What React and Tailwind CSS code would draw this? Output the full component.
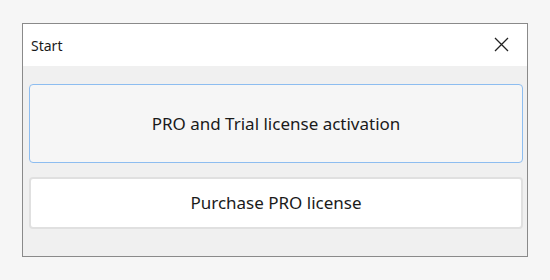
const App = () => {
  return (
    <div
      className="w-[550px] h-[280px] bg-[#f6f6f6] pt-[23px] pl-[22px]"
      style={{ fontFamily: '"Noto Sans", "Open Sans", sans-serif' }}
    >
      <div className="w-[506px] h-[234px] border border-[#8a8a8a] bg-[#f0f0f0] flex flex-col">
        {/* title bar */}
        <div className="h-[42px] bg-white flex items-center justify-between pl-[8px] pr-[18px] text-[#1a1a1a]">
          <span className="text-[14px]">Start</span>
          <svg width="15" height="15" viewBox="0 0 15 15" className="mb-[2px]">
            <path d="M1 1 L14 14 M14 1 L1 14" stroke="#222" strokeWidth="1.3" fill="none" />
          </svg>
        </div>

        {/* body */}
        <div className="flex flex-col pt-[18px] pl-[6px] gap-[14px]">
          <button className="w-[494px] h-[79px] rounded-[4px] border border-[#8dbdf0] bg-[#f6f6f6] text-[17px] text-[#1a1a1a]">
            PRO and Trial license activation
          </button>
          <button className="w-[494px] h-[52px] rounded-[4px] border-2 border-[#e0e0e0] bg-white text-[17px] text-[#1a1a1a]">
            Purchase PRO license
          </button>
        </div>
      </div>
    </div>
  );
};

export default App;
